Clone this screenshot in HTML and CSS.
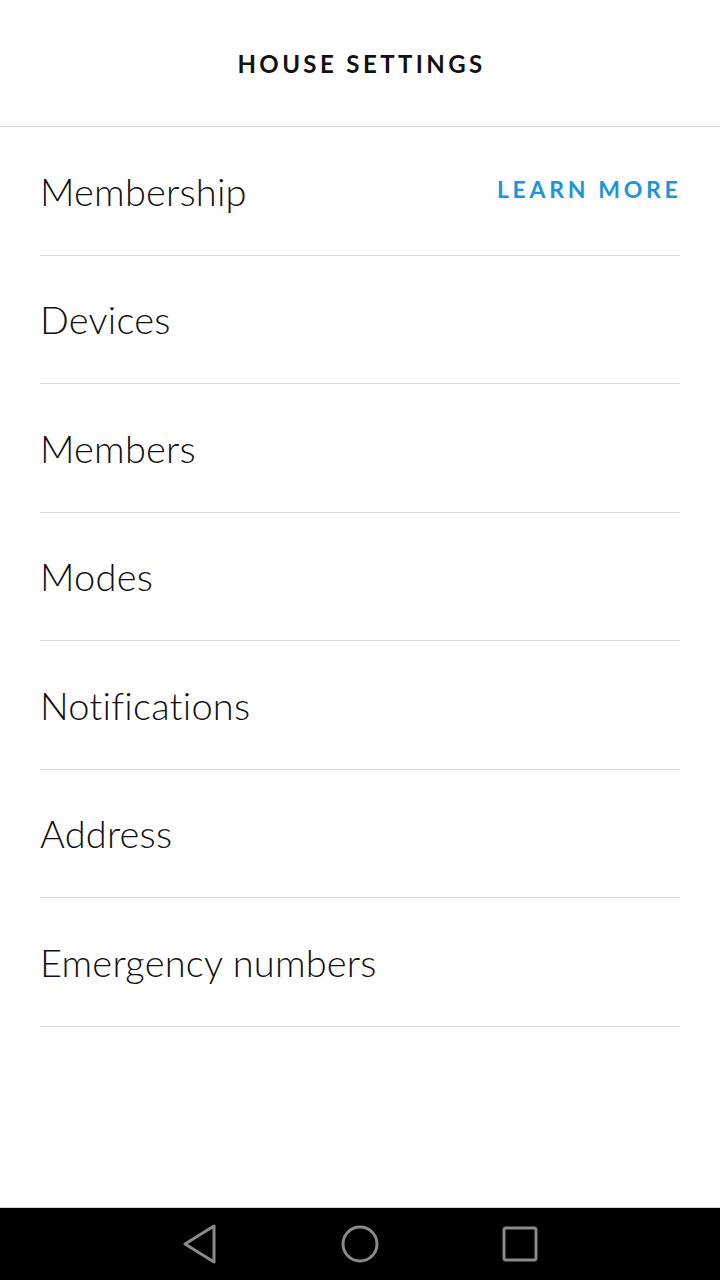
FILE: index.html
```html
<!DOCTYPE html>
<html lang="en">
<head>
  <meta charset="UTF-8">
  <meta name="viewport" content="width=device-width, initial-scale=1.0">
  <title>House Settings</title>
  <link rel="stylesheet" href="styles.css">
</head>
<body>
  <div class="screen">
    <header class="topbar">
      <h1>HOUSE SETTINGS</h1>
    </header>

    <ul class="settings">
      <li class="row">
        <span>Membership</span>
        <a class="learn" href="#">LEARN MORE</a>
      </li>
      <li class="row"><span>Devices</span></li>
      <li class="row"><span>Members</span></li>
      <li class="row"><span>Modes</span></li>
      <li class="row"><span>Notifications</span></li>
      <li class="row"><span>Address</span></li>
      <li class="row"><span>Emergency numbers</span></li>
    </ul>

    <nav class="navbar">
      <svg class="nav-icon" viewBox="0 0 40 40" width="40" height="40">
        <path d="M34 2 L34 38 L5 20 Z" fill="none" stroke="#8a8a8a" stroke-width="3" stroke-linejoin="round"/>
      </svg>
      <svg class="nav-icon" viewBox="0 0 40 40" width="40" height="40">
        <circle cx="20" cy="20" r="17" fill="none" stroke="#8a8a8a" stroke-width="3"/>
      </svg>
      <svg class="nav-icon" viewBox="0 0 40 40" width="40" height="40">
        <rect x="4" y="4" width="32" height="32" rx="2" fill="none" stroke="#8a8a8a" stroke-width="3"/>
      </svg>
    </nav>
  </div>
</body>
</html>
```

FILE: styles.css
```css
body {
  margin: 0;
  font-family: Lato, 'Open Sans', sans-serif;
  font-variant-ligatures: none;
  background: #ffffff;
  color: #111;
}
.screen {
  display: flex;
  flex-direction: column;
  height: 1280px;
}
.topbar {
  height: 126px;
  border-bottom: 1px solid #d6d6d6;
  display: flex;
  align-items: center;
  justify-content: center;
}
.topbar h1 {
  margin: 0 0 0 3px;
  font-size: 24px;
  font-weight: 700;
  letter-spacing: 3.4px;
  color: #111;
}
.settings {
  list-style: none;
  margin: 0;
  padding: 0 40px;
  flex: 1;
}
.row {
  height: 127.5px;
  border-bottom: 1px solid #d8d8d8;
  display: flex;
  align-items: center;
  justify-content: space-between;
  font-size: 38px;
  font-weight: 300;
  letter-spacing: 0.2px;
  color: #111;
}
.learn {
  font-size: 23px;
  font-weight: 700;
  letter-spacing: 3.7px;
  color: #1b95dc;
  text-decoration: none;
  margin-right: -1.5px;
  margin-top: -3px;
}
.navbar {
  height: 72px;
  border-top: 1px solid #cfcfcf;
  background: #000;
  display: grid;
  grid-template-columns: repeat(3, 160px);
  justify-content: center;
  align-items: center;
  justify-items: center;
}
.nav-icon {
  display: block;
}
```
